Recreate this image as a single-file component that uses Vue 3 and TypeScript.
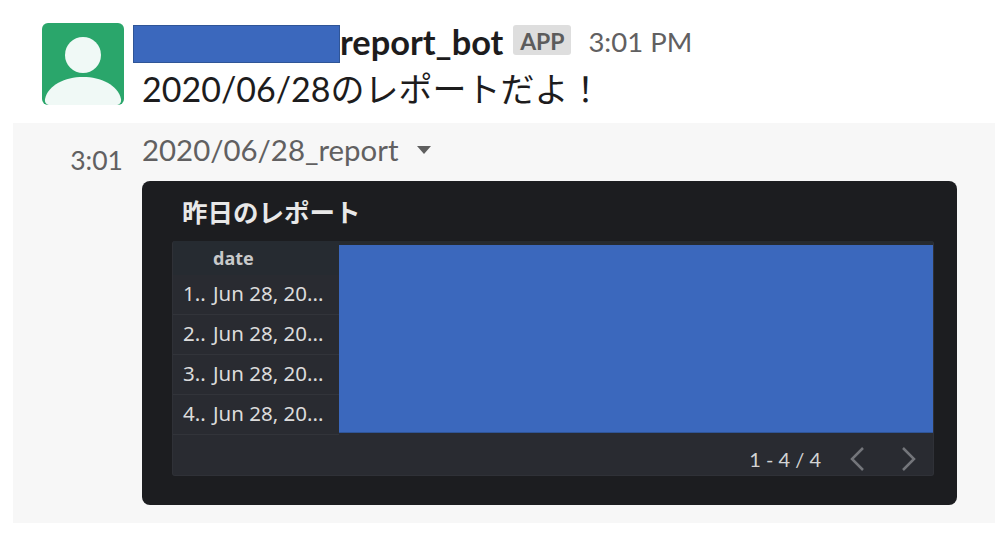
<script setup lang="ts">
const rows: string[] = ['1..', '2..', '3..', '4..']
</script>

<template>
  <div class="page">
    <div class="message">
      <svg class="avatar" viewBox="0 0 82 82" aria-hidden="true">
        <rect width="82" height="82" rx="6" fill="#2aa66b" />
        <circle cx="41" cy="32" r="18" fill="#f0f9f6" />
        <path d="M3 76C6 62 23 54 41 54C59 54 76 62 79 76C79.600 80 77 82 74 82H8C5 82 2.400 80 3 76Z" fill="#f0f9f6" />
      </svg>
      <div class="body">
        <div class="head">
          <span class="redact-name"></span>
          <span class="name">report_bot</span>
          <span class="badge">APP</span>
          <span class="time">3:01 PM</span>
        </div>
        <div class="text">2020/06/28のレポートだよ！</div>
      </div>
    </div>

    <div class="followup">
      <div class="stamp">3:01</div>
      <div class="attachment">
        <div class="file">
          <span>2020/06/28_report</span>
          <svg class="caret" viewBox="0 0 14 8" aria-hidden="true"><path d="M0 0H14L7 8Z" fill="#5f5f5f" /></svg>
        </div>
        <div class="card">
          <div class="title">昨日のレポート</div>
          <div class="table">
            <div class="grid">
              <div class="col">
                <div class="th">date</div>
                <div v-for="r in rows" :key="r" class="tr">
                  <span class="idx">{{ r }}</span>
                  <span class="cell">Jun 28, 20...</span>
                </div>
              </div>
              <div class="redact-table"></div>
            </div>
            <div class="pager">
              <span class="count">1 - 4 / 4</span>
              <svg class="chev" viewBox="0 0 16 26" aria-hidden="true"><path d="M14 2L3 13L14 24" /></svg>
              <svg class="chev" viewBox="0 0 16 26" aria-hidden="true"><path d="M2 2L13 13L2 24" /></svg>
            </div>
          </div>
        </div>
      </div>
    </div>
  </div>
</template>

<style scoped>
.page {
  width: 1005px;
  height: 536px;
  box-sizing: border-box;
  padding: 23px 10px 13px 13px;
  background: #fff;
  font-family: Lato, "Noto Sans CJK JP", sans-serif;
  color: #1d1c1d;
  overflow: hidden;
}
.message {
  display: flex;
  height: 100px;
  padding-left: 29px;
}
.avatar {
  width: 82px;
  height: 82px;
  flex: none;
}
.body {
  margin-left: 9px;
}
.head {
  display: flex;
  align-items: flex-start;
  height: 38px;
  margin-top: 2px;
}
.redact-name {
  width: 207px;
  height: 38px;
  box-sizing: border-box;
  background: #3b68bd;
  border: 1px solid #2f5597;
}
.name {
  font-size: 34.400px;
  font-weight: 700;
  line-height: 33px;
  color: #1d1c1d;
}
.badge {
  margin-left: 10px;
  width: 58px;
  height: 30px;
  border-radius: 3px;
  background: #dedede;
  color: #5c5c5c;
  font-size: 23px;
  font-weight: 700;
  line-height: 32px;
  text-align: center;
}
.time {
  margin-left: 17px;
  font-size: 27.500px;
  line-height: 34px;
  color: #616061;
}
.text {
  margin-left: 9px;
  font-size: 34px;
  line-height: 44px;
  margin-top: 4px;
  white-space: nowrap;
}
.followup {
  display: flex;
  height: 400px;
  background: #f7f7f7;
}
.stamp {
  width: 110px;
  flex: none;
  margin-top: 21px;
  text-align: right;
  font-size: 26.500px;
  line-height: 32px;
  color: #616061;
}
.attachment {
  margin-left: 19px;
  width: 815px;
}
.file {
  display: flex;
  align-items: center;
  height: 58px;
  font-size: 29.400px;
  color: #616061;
  padding-bottom: 5px;
  box-sizing: border-box;
}
.caret {
  width: 14px;
  height: 8px;
  margin-left: 19px;
}
.card {
  height: 324px;
  box-sizing: border-box;
  padding: 0 23px 0 30px;
  border-radius: 8px;
  background: #1c1d20;
  font-family: "Noto Sans", "Noto Sans CJK JP", sans-serif;
}
.title {
  height: 60px;
  padding: 12px 0 0 10px;
  box-sizing: border-box;
  font-family: "Noto Sans CJK JP", sans-serif;
  font-size: 25.500px;
  font-weight: 700;
  line-height: 36px;
  color: #e8e8e8;
}
.table {
  width: 762px;
  height: 235px;
  box-sizing: border-box;
  border: 1px solid #2f3137;
  border-top: none;
  border-radius: 3px;
  background: #292b31;
  overflow: hidden;
}
.grid {
  display: flex;
  height: 193px;
  background: linear-gradient(#262b31, #262b31) 0 0 / 100% 34px no-repeat;
}
.col {
  width: 166px;
  flex: none;
}
.th {
  height: 34px;
  padding: 5px 0 0 40px;
  box-sizing: border-box;
  font-size: 18px;
  font-weight: 700;
  line-height: 24px;
  color: #c8c9ca;
}
.tr {
  display: flex;
  height: 40px;
  box-sizing: border-box;
  border-bottom: 1px solid #32343a;
  padding-left: 10px;
  font-size: 20.500px;
  line-height: 37px;
  color: #dcdcdc;
  white-space: nowrap;
}
.idx {
  width: 30px;
  flex: none;
}
.redact-table {
  width: 594px;
  height: 188px;
  margin-top: 4px;
  background: #3b68bd;
  border-bottom: 1px solid #2f5597;
  box-sizing: border-box;
}
.pager {
  display: flex;
  align-items: center;
  justify-content: flex-end;
  height: 41px;
  padding: 9px 16px 0 0;
  box-sizing: border-box;
}
.count {
  font-family: Lato, "Noto Sans", sans-serif;
  font-size: 20px;
  color: #d4d4d4;
  margin-right: 28px;
}
.chev {
  width: 16px;
  height: 26px;
  fill: none;
  stroke: #73757a;
  stroke-width: 2.500;
}
.chev + .chev {
  margin-left: 36px;
}
</style>
